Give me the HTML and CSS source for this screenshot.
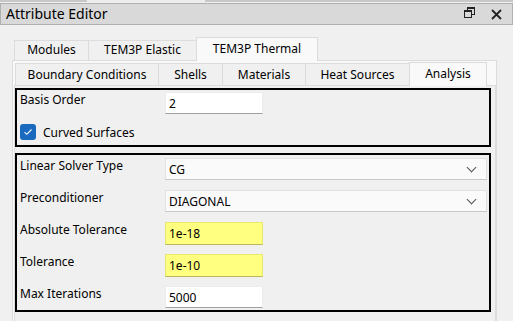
FILE: index.html
```html
<!DOCTYPE html>
<html lang="en">
<head>
    <meta charset="UTF-8">
    <title>Attribute Editor</title>
    <link rel="stylesheet" href="styles.css">
</head>
<body>
    <div class="topstrip"><span class="topstrip-lit"></span></div>

    <div class="titlebar">
        <span class="title">Attribute Editor</span>
        <span class="title-buttons">
            <svg class="btn-float" width="11" height="11" viewBox="0 0 11 11">
                <rect x="3.5" y="0.5" width="7" height="7" fill="none" stroke="#222"/>
                <rect x="3" y="0" width="8" height="2" fill="#222"/>
                <rect x="0.5" y="3.5" width="7" height="7" fill="#d9d9d9" stroke="#222"/>
                <rect x="0" y="3" width="8" height="2" fill="#222"/>
            </svg>
            <svg class="btn-close" width="11" height="11" viewBox="0 0 11 11">
                <path d="M1 1 L10 10 M10 1 L1 10" stroke="#222" stroke-width="1.8"/>
            </svg>
        </span>
    </div>

    <div class="tabs outer-tabs">
        <div class="tab" style="width: 75px;">Modules</div>
        <div class="tab" style="width: 109px;">TEM3P Elastic</div>
        <div class="tab selected" style="width: 122px;">TEM3P Thermal</div>
    </div>

    <div class="outer-pane">
        <div class="tabs inner-tabs">
            <div class="tab" style="width: 144px;">Boundary Conditions</div>
            <div class="tab" style="width: 65px;">Shells</div>
            <div class="tab" style="width: 84px;">Materials</div>
            <div class="tab" style="width: 105px;">Heat Sources</div>
            <div class="tab selected" style="width: 78px;">Analysis</div>
        </div>

        <div class="inner-pane">
            <div class="group group-basis">
                <div class="row">
                    <span class="label">Basis Order</span>
                    <div class="field">2</div>
                </div>
                <div class="row check-row">
                    <span class="checkbox">
                        <svg width="10" height="8" viewBox="0 0 10 8">
                            <path d="M1.5 4.2 L3.8 6.3 L8.5 1.5" fill="none" stroke="#fff" stroke-width="1.1"/>
                        </svg>
                    </span>
                    <span>Curved Surfaces</span>
                </div>
            </div>

            <div class="group group-solver">
                <div class="row">
                    <span class="label">Linear Solver Type</span>
                    <div class="combo">CG<span class="chevron"></span></div>
                </div>
                <div class="row">
                    <span class="label">Preconditioner</span>
                    <div class="combo">DIAGONAL<span class="chevron"></span></div>
                </div>
                <div class="row">
                    <span class="label">Absolute Tolerance</span>
                    <div class="field changed">1e-18</div>
                </div>
                <div class="row">
                    <span class="label">Tolerance</span>
                    <div class="field changed">1e-10</div>
                </div>
                <div class="row">
                    <span class="label">Max Iterations</span>
                    <div class="field">5000</div>
                </div>
            </div>
        </div>
    </div>
</body>
</html>
```

FILE: styles.css
```css
body {
    margin: 0;
    width: 513px;
    height: 321px;
    overflow: hidden;
    background: #f0f0f0;
    font-family: "Noto Sans", "Open Sans", sans-serif;
    font-size: 12px;
    color: #000;
}
.topstrip {
    height: 1px;
    border-top: 2px solid #c8c8c8;
    position: relative;
}
.topstrip-lit {
    position: absolute;
    left: 87px;
    top: -2px;
    width: 118px;
    height: 2px;
    background: #ececec;
}
.titlebar {
    display: flex;
    align-items: center;
    justify-content: space-between;
    height: 20px;
    background: #d9d9d9;
    border: 1px solid #b0b0b0;
    padding-left: 5px;
}
.title {
    font-size: 14px;
    line-height: 20px;
}
.title-buttons {
    display: flex;
    align-items: center;
    gap: 16px;
    padding-right: 10px;
}
.btn-float { margin-top: -3px; }

/* tab bars */
.tabs {
    display: flex;
    align-items: flex-end;
    position: relative;
    z-index: 1;
}
.tab {
    box-sizing: border-box;
    text-align: center;
    background: #f0f0f0;
    border: 1px solid #dcdcdc;
    border-bottom: none;
    margin-right: -1px;
}
.tab.selected {
    background: #f9f9f9;
}
.outer-tabs {
    margin: 12px 0 0 14px;
    height: 23px;
}
.outer-tabs .tab {
    height: 20px;
    line-height: 18px;
}
.outer-tabs .tab.selected {
    height: 24px;
    line-height: 22px;
    margin-bottom: -1px;
}
.outer-pane {
    margin-left: 12px;
    width: 483px;
    height: 270px;
    background: #f9f9f9;
    border: 1px solid #dcdcdc;
}
.inner-tabs {
    margin: 1px 0 0 2px;
    height: 23px;
}
.inner-tabs .tab {
    height: 22px;
    line-height: 21px;
}
.inner-tabs .tab.selected {
    height: 24px;
    line-height: 22px;
    margin-bottom: -1px;
}
.inner-pane {
    margin-left: 1px;
    width: 480px;
    height: 240px;
    background: #f0f0f0;
    border: 1px solid #dcdcdc;
    padding-top: 2px;
}

/* group boxes */
.group {
    box-sizing: border-box;
    width: 476px;
    border: 2px solid #000;
    display: flex;
    flex-direction: column;
}
.group-basis {
    padding: 2px 2px 3px 3px;
    gap: 8px;
}
.group-solver {
    margin-top: 6px;
    padding: 3px 2px 2px 3px;
    gap: 10px;
}
.row {
    display: flex;
    height: 22px;
}
.label {
    width: 145px;
    flex: none;
    line-height: 16px;
}
.check-row {
    height: 20px;
    align-items: center;
    gap: 7px;
}
.checkbox {
    width: 16px;
    height: 16px;
    border-radius: 3px;
    background: #1a6ac0;
    display: flex;
    align-items: center;
    justify-content: center;
}

/* inputs */
.field {
    box-sizing: border-box;
    width: 98px;
    height: 22px;
    background: #fff;
    border: 1px solid #ececec;
    border-bottom-color: #a0a0a0;
    padding-left: 3px;
    line-height: 21px;
}
.field.changed {
    height: 23px;
    background: #ffff80;
    border-color: #e8e870;
    border-bottom-color: #b8b860;
}
.combo {
    box-sizing: border-box;
    position: relative;
    width: 322px;
    height: 22px;
    background: #fafafa;
    border: 1px solid #e0e0e0;
    border-bottom-color: #c8c8c8;
    padding-left: 3px;
    line-height: 21px;
}
.chevron {
    position: absolute;
    right: 11px;
    top: 5px;
    width: 6px;
    height: 6px;
    border-right: 1px solid #555;
    border-bottom: 1px solid #555;
    transform: rotate(45deg);
}
```
